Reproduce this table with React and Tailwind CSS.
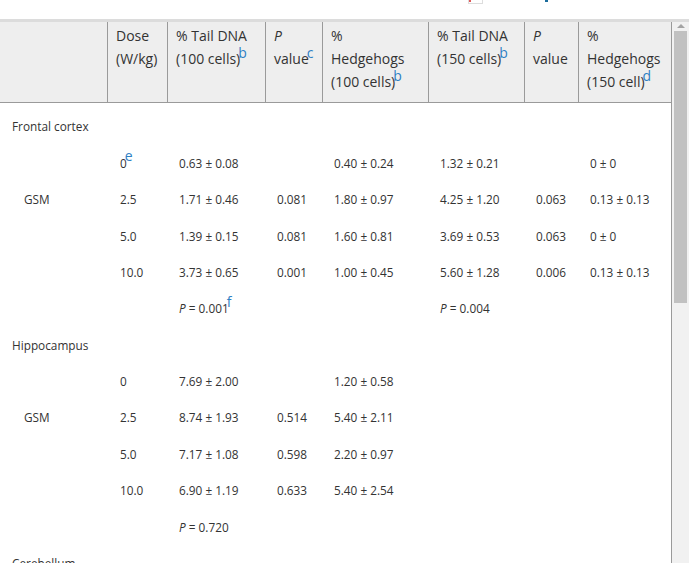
import React from "react";

const cols = "grid grid-cols-[107px_60px_98px_57px_106px_96px_54px_93px]";

function Sup({ children }) {
  return (
    <sup className="text-[14px] text-[#2f80c4] top-[-0.45em] -ml-[2px]">{children}</sup>
  );
}

function Head({ lines, first }) {
  return (
    <div className={`pl-2 pt-[2px] pb-[9px] leading-[23px] ${first ? "" : "border-l border-[#9a9a9a]"}`}>
      {lines.map((l, i) => (
        <div key={i} className="whitespace-nowrap">{l}</div>
      ))}
    </div>
  );
}

function Row({ cells }) {
  return (
    <div className={`${cols} h-[36.4px] items-center`}>
      {cells.map((c, i) => (
        <div key={i} className={i === 0 ? "pl-[24px]" : i === 1 ? "pl-[13px]" : "pl-[12px]"}>
          {c}
        </div>
      ))}
    </div>
  );
}

function Section({ title }) {
  return (
    <div className="h-[36.4px] flex items-center pl-[12px]">{title}</div>
  );
}

const P = ({ v, sup }) => (
  <span>
    <i>P</i> = {v}
    {sup && <Sup>{sup}</Sup>}
  </span>
);

export default function App() {
  return (
    <div className="w-[693px] h-[563px] bg-white overflow-hidden font-['Open_Sans',sans-serif] text-[#333]">
      <div className="h-[19px] flex items-start">
        <div className="ml-[468px] w-[15px] h-[4px] border border-t-0 border-[#dddddd] flex">
          <div className="w-[2px] h-[2px] bg-[#e05a5a]" />
        </div>
        <div className="ml-[62px] w-[3px] h-[2px] bg-[#1b6c9c]" />
      </div>
      <div className="w-[689px] h-[544px] border-t-[3px] border-[#dcdcdc] flex">
        <div className="w-[672px] border-r border-[#9a9a9a] overflow-hidden">
          <div className={`${cols} bg-[#eeeeee] border-b border-[#9a9a9a] text-[14px]`}>
            <Head first lines={[""]} />
            <Head lines={["Dose", "(W/kg)"]} />
            <Head lines={["% Tail DNA", <span>(100 cells)<Sup>b</Sup></span>]} />
            <Head lines={[<i>P</i>, <span>value<Sup>c</Sup></span>]} />
            <Head lines={["%", "Hedgehogs", <span>(100 cells)<Sup>b</Sup></span>]} />
            <Head lines={["% Tail DNA", <span>(150 cells)<Sup>b</Sup></span>]} />
            <Head lines={[<i>P</i>, "value"]} />
            <Head lines={["%", "Hedgehogs", <span>(150 cell)<Sup>d</Sup></span>]} />
          </div>
          <div className="h-[6px]" />
          <div className="text-[11.8px]">
            <Section title="Frontal cortex" />
            <Row cells={["", <span>0<Sup>e</Sup></span>, "0.63 ± 0.08", "", "0.40 ± 0.24", "1.32 ± 0.21", "", "0 ± 0"]} />
            <Row cells={["GSM", "2.5", "1.71 ± 0.46", "0.081", "1.80 ± 0.97", "4.25 ± 1.20", "0.063", "0.13 ± 0.13"]} />
            <Row cells={["", "5.0", "1.39 ± 0.15", "0.081", "1.60 ± 0.81", "3.69 ± 0.53", "0.063", "0 ± 0"]} />
            <Row cells={["", "10.0", "3.73 ± 0.65", "0.001", "1.00 ± 0.45", "5.60 ± 1.28", "0.006", "0.13 ± 0.13"]} />
            <Row cells={["", "", <P v="0.001" sup="f" />, "", "", <P v="0.004" />, "", ""]} />
            <Section title="Hippocampus" />
            <Row cells={["", "0", "7.69 ± 2.00", "", "1.20 ± 0.58", "", "", ""]} />
            <Row cells={["GSM", "2.5", "8.74 ± 1.93", "0.514", "5.40 ± 2.11", "", "", ""]} />
            <Row cells={["", "5.0", "7.17 ± 1.08", "0.598", "2.20 ± 0.97", "", "", ""]} />
            <Row cells={["", "10.0", "6.90 ± 1.19", "0.633", "5.40 ± 2.54", "", "", ""]} />
            <Row cells={["", "", <P v="0.720" />, "", "", "", "", ""]} />
            <Section title="Cerebellum" />
          </div>
        </div>
        <div className="w-[17px] bg-[#f1f1f1] flex flex-col items-center">
          <div className="mt-[2px] w-0 h-0 border-l-[4px] border-r-[4px] border-b-[4px] border-l-transparent border-r-transparent border-b-[#a3a3a3]" />
          <div className="mt-[3px] w-[13px] h-[272px] bg-[#c1c1c1]" />
        </div>
      </div>
    </div>
  );
}
